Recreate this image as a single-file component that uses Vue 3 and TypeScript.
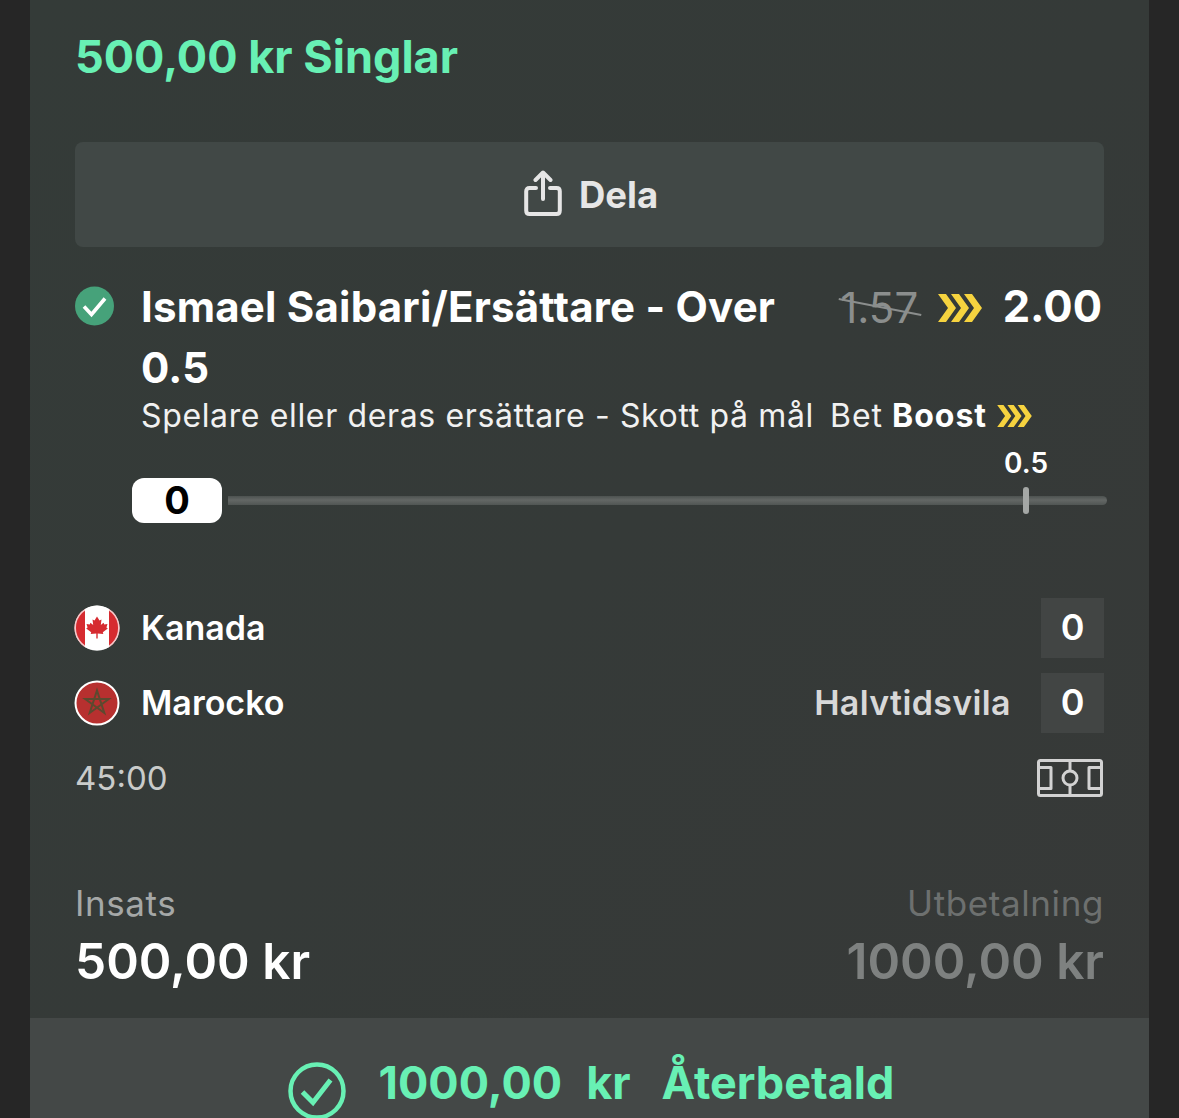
<template>
  <div class="page">
    <div class="card">
      <div class="body">
        <h1 class="title">500,00 kr Singlar</h1>

        <button type="button" class="share">
          <svg class="share-icon" width="38" height="46" viewBox="0 0 38 46" fill="none" stroke="#e6e6e6" stroke-width="4" stroke-linecap="round" stroke-linejoin="round">
            <path d="M12 18H5.500Q2.200 18 2.200 21.300V40.500Q2.200 44 5.500 44H32.500Q35.800 44 35.800 40.500V21.300Q35.800 18 32.500 18H26" />
            <path d="M19 29V3M11.500 10L19 2.500L26.500 10" />
          </svg>
          <span>Dela</span>
        </button>

        <div class="selection">
          <svg class="status" width="40" height="40" viewBox="0 0 40 40">
            <circle cx="19.500" cy="20" r="19.500" fill="#46a27a" />
            <path d="M9 20.500L16.500 28.500L30 12.500" fill="none" stroke="#fff" stroke-width="3.600" />
          </svg>
          <div class="selection-main">
            <div class="selection-head">
              <div class="selection-name">Ismael Saibari/Ersättare - Over 0.5</div>
              <div class="odds">
                <span class="odds-old">
                  1.57
                  <i class="strike"></i>
                </span>
                <svg class="chevrons" width="44" height="28" viewBox="0 0 44 28" fill="#f6d33f">
                  <path v-for="x in chevronX" :key="x" :d="chevronPath(x)" />
                </svg>
                <span class="odds-new">2.00</span>
              </div>
            </div>
            <div class="market">
              <span>Spelare eller deras ersättare - Skott på mål</span>
              <span class="boost">Bet <b>Boost</b>
                <svg class="chevrons-small" width="35" height="22" viewBox="0 0 44 28" fill="#f6d33f">
                  <path v-for="x in chevronX" :key="x" :d="chevronPath(x)" />
                </svg>
              </span>
            </div>
          </div>
        </div>

        <div class="tracker">
          <div class="pill">0</div>
          <div class="track">
            <div class="marker" :style="{ left: markerLeft + 'px' }">
              <span class="marker-label">0.5</span>
              <i class="marker-tick"></i>
            </div>
          </div>
        </div>

        <div class="match">
          <div class="team">
            <svg class="flag" width="46" height="46" viewBox="0 0 46 46">
              <defs>
                <clipPath id="flagClip"><circle cx="23" cy="23" r="22.500" /></clipPath>
              </defs>
              <g clip-path="url(#flagClip)">
                <rect width="46" height="46" fill="#fff" />
                <rect width="11" height="46" fill="#d62b30" />
                <rect x="35" width="11" height="46" fill="#d62b30" />
                <path d="M23 11.500L25.500 15.500L27.500 14.500L26.800 20L29.500 17.800L30.300 19.600L33.500 19L32.400 22.500L33.800 23.400L28.800 27.300L29.300 29L23.700 28.400V33.500H22.300V28.400L16.700 29L17.200 27.300L12.200 23.400L13.600 22.500L12.500 19L15.700 19.600L16.500 17.800L19.200 20L18.500 14.500L20.500 15.500Z" fill="#d62b30" />
              </g>
              <circle cx="23" cy="23" r="21.800" fill="none" stroke="#fff" stroke-width="1.500" stroke-opacity="0.75" />
            </svg>
            <span class="team-name">Kanada</span>
            <span class="score">0</span>
          </div>
          <div class="team">
            <svg class="flag" width="46" height="46" viewBox="0 0 46 46">
              <circle cx="23" cy="23" r="21.500" fill="#b7302f" stroke="#fff" stroke-width="2" />
              <path d="M23 10.500L30.300 33L11.200 19.100H34.800L15.700 33Z" fill="none" stroke="#5b4a2f" stroke-width="2" />
            </svg>
            <span class="team-name">Marocko</span>
            <span class="period">Halvtidsvila</span>
            <span class="score">0</span>
          </div>
          <div class="clock-row">
            <span class="clock">45:00</span>
            <svg class="pitch" width="66" height="38" viewBox="0 0 66 38" fill="none" stroke="#d2d2d2" stroke-width="3" stroke-linejoin="round">
              <rect x="1.500" y="1.500" width="63" height="35" rx="2" />
              <path d="M33 1.500V11.500M33 26.500V36.500" />
              <circle cx="33" cy="19" r="7" />
              <path d="M2 8.500H14V29.500H2M64 8.500H52V29.500H64" />
            </svg>
          </div>
        </div>

        <div class="totals">
          <div>
            <div class="total-label">Insats</div>
            <div class="total-value">500,00 kr</div>
          </div>
          <div class="total-right">
            <div class="total-label">Utbetalning</div>
            <div class="total-value">1000,00 kr</div>
          </div>
        </div>
      </div>

      <div class="footer">
        <svg class="footer-icon" width="58" height="58" viewBox="0 0 58 58" fill="none" stroke="#68f0b4" stroke-width="4.500">
          <circle cx="29" cy="29" r="26.500" />
          <path d="M14.500 30L25 40.500L42.500 18" stroke-width="5" />
        </svg>
        <div class="footer-text">
          <span>1000,00</span>
          <span class="footer-currency">kr</span>
          <span class="footer-status">Återbetald</span>
        </div>
      </div>
    </div>
  </div>
</template>

<script setup lang="ts">
const chevronX = [0, 13, 26]
const markerLeft = 798

const chevronPath = (x: number) => {
  return `M${x} 0H${x + 8}L${x + 18} 14L${x + 8} 28H${x}L${x + 10} 14Z`
}
</script>

<style>
html,
body {
  margin: 0;
  background: #262626;
}
</style>

<style scoped>
.page {
  width: 1179px;
  height: 1118px;
  overflow: hidden;
  background: #262626;
  font-family: Inter, "Liberation Sans", sans-serif;
  color: #fff;
}

.card {
  width: 1119px;
  height: 1118px;
  margin-left: 30px;
  background: linear-gradient(135deg, #343b38 0%, #353a38 50%, #373938 100%);
  display: flex;
  flex-direction: column;
}

.body {
  height: 1018px;
  padding: 0 45px;
  box-sizing: border-box;
}

.title {
  margin: 0;
  padding-top: 31px;
  height: 142px;
  box-sizing: border-box;
  font-size: 45px;
  line-height: 52px;
  font-weight: 700;
  color: #68f0b4;
}

.share {
  width: 100%;
  height: 105px;
  border: none;
  border-radius: 8px;
  background: #414846;
  color: #e6e6e6;
  display: flex;
  align-items: center;
  justify-content: center;
  gap: 17px;
  font-family: inherit;
  font-size: 36.500px;
  font-weight: 700;
  padding: 0 0 0 3px;
}

.share-icon {
  margin-bottom: 3px;
}

.selection {
  display: flex;
  gap: 27px;
  margin-top: 29px;
}

.status {
  flex: none;
  margin-top: 10px;
}

.selection-main {
  flex: 1;
  min-width: 0;
}

.selection-head {
  display: flex;
  justify-content: space-between;
}

.selection-name {
  width: 660px;
  margin-left: -1px;
  font-size: 42px;
  line-height: 61px;
  font-weight: 650;
  letter-spacing: 0.2px;
}

.odds {
  display: flex;
  align-items: flex-start;
  height: 61px;
  margin-right: 2px;
}

.odds-old {
  position: relative;
  margin-top: 8px;
  margin-right: 20px;
  font-size: 42px;
  line-height: 48px;
  color: #8b8e8d;
}

.strike {
  position: absolute;
  left: -2px;
  right: -4px;
  top: 22px;
  height: 2px;
  background: #8b8e8d;
  transform: rotate(11deg);
}

.chevrons {
  margin-top: 18px;
  margin-right: 20.500px;
}

.odds-new {
  font-size: 43.500px;
  line-height: 61px;
  font-weight: 650;
}

.market {
  display: flex;
  margin-left: -1px;
  font-size: 32px;
  line-height: 36px;
  letter-spacing: 0.640px;
  color: #f1f1f1;
  white-space: nowrap;
  gap: 16px;
}

.boost {
  display: inline-flex;
  align-items: center;
  gap: 9px;
  letter-spacing: 1px;
}

.boost b {
  font-weight: 700;
  color: #fff;
}

.chevrons-small {
  margin-left: 1px;
}

.tracker {
  display: flex;
  align-items: center;
  gap: 6px;
  margin: 43px -3px 0 57px;
  height: 46px;
}

.pill {
  flex: none;
  width: 90px;
  height: 45px;
  border-radius: 12px;
  background: #fff;
  color: #000;
  text-align: center;
  font-size: 38px;
  line-height: 45px;
  font-weight: 700;
}

.track {
  flex: 1;
  position: relative;
  height: 9px;
  border-radius: 0 5px 5px 0;
  background: linear-gradient(#4d5250, #636765 45%, #515654);
}

.marker {
  position: absolute;
  top: 0;
  bottom: 0;
  width: 0;
}

.marker-label {
  position: absolute;
  left: 0;
  bottom: 25px;
  transform: translateX(-50%);
  font-size: 28px;
  line-height: 34px;
  font-weight: 600;
}

.marker-tick {
  position: absolute;
  left: -3px;
  top: -9px;
  width: 6px;
  height: 27px;
  border-radius: 3px;
  background: #a4a7a5;
}

.match {
  margin-top: 75px;
}

.team {
  display: flex;
  align-items: center;
  height: 60px;
  margin-bottom: 15px;
}

.flag {
  flex: none;
  margin-left: -1px;
}

.team-name {
  margin-left: 21px;
  padding-bottom: 2px;
  font-size: 34px;
  font-weight: 600;
  flex: 1;
}

.period {
  padding-bottom: 2px;
  font-size: 34px;
  font-weight: 600;
  letter-spacing: 0.35px;
  color: #d8d8d8;
  margin-right: 30px;
}

.score {
  flex: none;
  width: 63px;
  height: 60px;
  background: #424544;
  text-align: center;
  font-size: 36px;
  line-height: 58px;
  font-weight: 600;
}

.clock-row {
  display: flex;
  align-items: center;
  justify-content: space-between;
  height: 40px;
  margin-top: 25px;
}

.clock {
  font-size: 33px;
  color: #c9cbca;
}

.pitch {
  margin-right: 1px;
}

.totals {
  display: flex;
  justify-content: space-between;
  margin-top: 80px;
}

.total-label {
  font-size: 35px;
  line-height: 51px;
  letter-spacing: 0.6px;
  color: #a5a8a7;
}

.total-value {
  font-size: 49.500px;
  line-height: 64px;
  font-weight: 600;
}

.total-right {
  text-align: right;
  color: #7e8180;
}

.total-right .total-label {
  color: #6d706f;
}

.footer {
  flex: 1;
  background: #444847;
  display: flex;
  align-items: flex-start;
  justify-content: center;
  gap: 33px;
  padding: 35px 0 0 3px;
  box-sizing: border-box;
  color: #68f0b4;
  overflow: hidden;
}

.footer-icon {
  flex: none;
  margin-top: 9px;
}

.footer-text {
  display: flex;
  font-size: 45px;
  line-height: 60px;
  font-weight: 650;
  white-space: nowrap;
}

.footer-currency {
  margin-left: 24px;
}

.footer-status {
  margin-left: 31px;
}
</style>
